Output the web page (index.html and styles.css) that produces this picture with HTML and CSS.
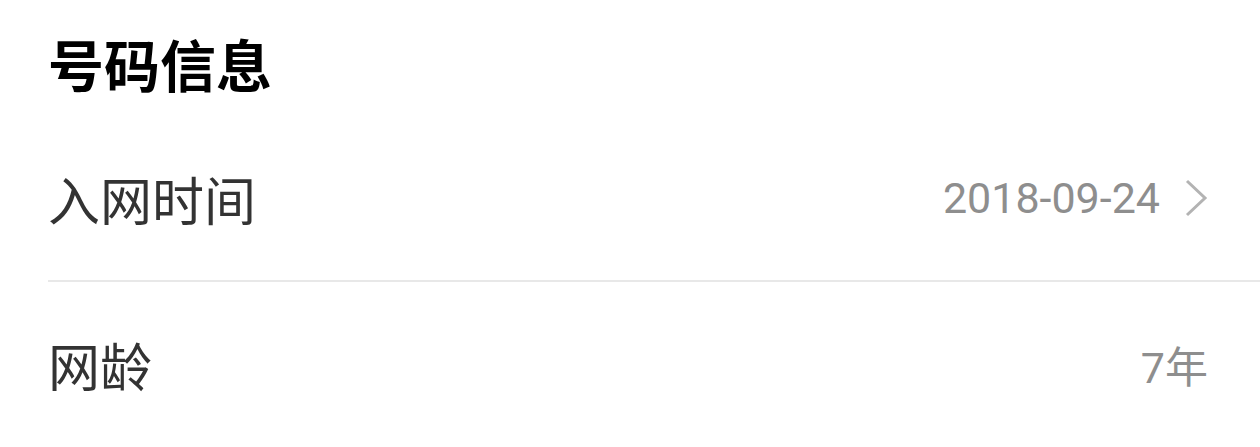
FILE: index.html
```html
<html>
<head>
<meta charset="utf-8" />
<link rel="stylesheet" href="styles.css">
</head>
<body>
<div class="info">
	<div class="info-title">号码信息</div>
	<div class="info-row first">
		<span class="info-label">入网时间</span>
		<span class="info-value">
			<span>2018-09-24</span>
			<svg class="chevron" width="24" height="38" viewBox="0 0 24 38">
				<path d="M3 2 L21 19 L3 36" fill="none" stroke="#b3b3b3" stroke-width="3" />
			</svg>
		</span>
	</div>
	<div class="info-row last">
		<span class="info-label">网龄</span>
		<span class="info-value">7年</span>
	</div>
</div>
</body>
</html>
```
FILE: styles.css
```css
body {
  margin: 0;
  padding: 0;
  background-color: #fff;
  font-family: Roboto, "Noto Sans CJK SC", sans-serif;
  overflow: hidden;
}

.info {
  padding-left: 48px;
}

.info-title {
  font-family: "Noto Sans CJK SC", sans-serif;
  font-weight: bold;
  font-size: 56px;
  color: #000;
  height: 116px;
  line-height: 126px;
}

.info-row {
  display: flex;
  align-items: center;
  justify-content: space-between;
  height: 160px;
  padding-right: 52px;
  border-bottom: 2px solid #e8e8e8;
}

.info-row.first {
  height: 164px;
}

.info-row.last {
  border-bottom: none;
  height: 164px;
}

.info-label {
  font-family: "Noto Sans CJK SC", sans-serif;
  font-size: 52px;
  color: #333;
}

.info-value {
  display: flex;
  align-items: center;
  gap: 24px;
  font-size: 43px;
  color: #8e8e8e;
}

.chevron {
  display: block;
}
```
